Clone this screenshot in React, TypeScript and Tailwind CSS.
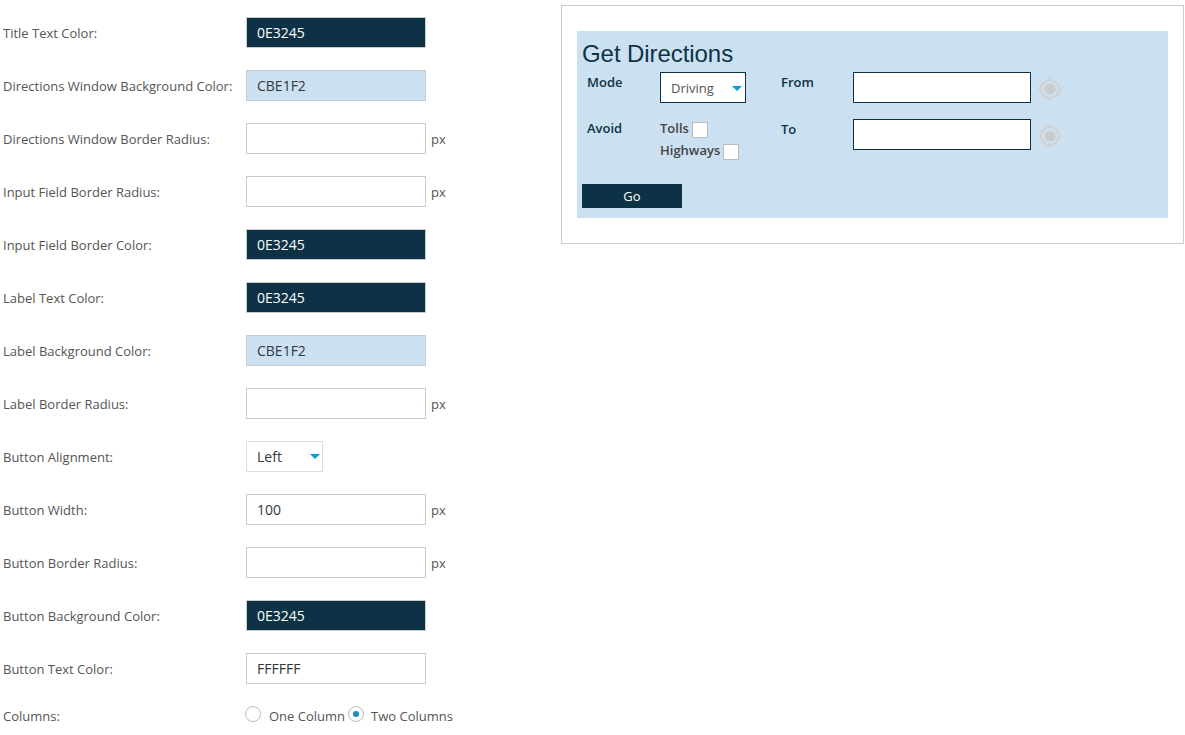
import React from 'react';

type Row = {
  label: string;
  kind: 'dark' | 'light' | 'blank' | 'white';
  value?: string;
  px?: boolean;
};

const rows: Row[] = [
  { label: 'Title Text Color:', kind: 'dark', value: '0E3245' },
  { label: 'Directions Window Background Color:', kind: 'light', value: 'CBE1F2' },
  { label: 'Directions Window Border Radius:', kind: 'blank', px: true },
  { label: 'Input Field Border Radius:', kind: 'blank', px: true },
  { label: 'Input Field Border Color:', kind: 'dark', value: '0E3245' },
  { label: 'Label Text Color:', kind: 'dark', value: '0E3245' },
  { label: 'Label Background Color:', kind: 'light', value: 'CBE1F2' },
  { label: 'Label Border Radius:', kind: 'blank', px: true },
];

const rows2: Row[] = [
  { label: 'Button Width:', kind: 'white', value: '100', px: true },
  { label: 'Button Border Radius:', kind: 'blank', px: true },
  { label: 'Button Background Color:', kind: 'dark', value: '0E3245' },
  { label: 'Button Text Color:', kind: 'white', value: 'FFFFFF' },
];

const Caret = () => (
  <span className="w-0 h-0 border-x-[5px] border-x-transparent border-t-[5px] border-t-[#00a0d2]" />
);

const TargetIcon = () => (
  <svg width="26" height="26" viewBox="0 0 26 26" className="shrink-0">
    <circle cx="13" cy="13" r="9" fill="none" stroke="#d0d0d0" strokeWidth="2" />
    <circle cx="13" cy="13" r="5.5" fill="#cbcbcb" />
    <path d="M13 0.7v3.3M13 22v3.3M0.7 13h3.3M22 13h3.3" stroke="#d3d3d3" strokeWidth="2" />
  </svg>
);

const FieldRow = ({ row }: { row: Row }) => {
  const colors =
    row.kind === 'dark'
      ? 'bg-[#0e3245] text-white'
      : row.kind === 'light'
        ? 'bg-[#cbe1f2] text-[#32373c]'
        : 'bg-white text-[#32373c]';
  return (
    <div className="flex items-center h-[31px] mb-[22px]">
      <label className="w-[243px] shrink-0 pt-[2px] text-[13px] text-[#555]">{row.label}</label>
      <div className={`w-[180px] h-[31px] border border-[#c8ccd0] pl-[10px] flex items-center text-[14px] ${colors}`}>
        {row.value}
      </div>
      {row.px && <span className="ml-[5px] pt-[2px] text-[13px] text-[#555]">px</span>}
    </div>
  );
};

const DirectionsPreview = () => (
  <div className="w-[623px] h-[239px] mt-[5px] border border-[#ccc] bg-white pt-[25px] pl-[15px]">
    <div className="w-[591px] h-[187px] bg-[#cbe1f2] text-[#0e3245] text-[13px]">
      <div className="h-[41px] pl-[5px] pt-[8px] text-[24px] leading-[30px] tracking-[-0.07px] font-['Liberation_Sans',Arial,sans-serif]">
        Get Directions
      </div>

      <div className="flex h-[47px]">
        <div className="w-[83px] pl-[10px] font-semibold leading-[20px]">Mode</div>
        <div className="w-[121px]">
          <div className="w-[86px] h-[31px] border border-[#0e3245] bg-white flex items-center justify-between pt-[2px] pl-[10px] pr-[3px] text-[#555]">
            Driving
            <Caret />
          </div>
        </div>
        <div className="w-[72px] font-semibold leading-[20px]">From</div>
        <div className="w-[178px] h-[31px] border border-[#0e3245] bg-white" />
        <div className="ml-[6px] mt-[4px]">
          <TargetIcon />
        </div>
      </div>

      <div className="flex h-[65px]">
        <div className="w-[83px] pl-[10px] font-semibold leading-[19px]">Avoid</div>
        <div className="w-[121px] text-[#444] font-semibold">
          <div className="flex items-start h-[22px] leading-[18px]">
            Tolls
            <span className="ml-[3px] mt-[3px] w-4 h-4 border border-[#bbb] bg-white" />
          </div>
          <div className="flex items-start leading-[18px]">
            Highways
            <span className="ml-[3px] mt-[3px] w-4 h-4 border border-[#bbb] bg-white" />
          </div>
        </div>
        <div className="w-[72px] font-semibold leading-[20px]">To</div>
        <div className="w-[178px] h-[31px] border border-[#0e3245] bg-white" />
        <div className="ml-[6px] mt-[4px]">
          <TargetIcon />
        </div>
      </div>

      <div className="pl-[5px]">
        <div className="w-[100px] h-[24px] pt-[1px] bg-[#0e3245] text-white font-medium flex items-center justify-center">Go</div>
      </div>
    </div>
  </div>
);

export default function App() {
  return (
    <div className="flex w-[1185px] h-[735px] overflow-hidden bg-white font-['Open_Sans',sans-serif]">
      <div className="w-[561px] shrink-0 pl-[3px] pt-[17px]">
        {rows.map((row) => (
          <FieldRow key={row.label} row={row} />
        ))}

        <div className="flex items-center h-[31px] mb-[22px]">
          <label className="w-[243px] shrink-0 pt-[2px] text-[13px] text-[#555]">Button Alignment:</label>
          <div className="w-[77px] h-[31px] border border-[#ddd] flex items-center justify-between pl-[10px] pr-[2px] text-[14px] text-[#32373c]">
            Left
            <Caret />
          </div>
        </div>

        {rows2.map((row) => (
          <FieldRow key={row.label} row={row} />
        ))}

        <div className="flex items-center h-[16px] text-[13px] text-[#555]">
          <label className="w-[242px] shrink-0 pt-[6px]">Columns:</label>
          <span className="w-4 h-4 rounded-full border border-[#bbb] bg-white" />
          <span className="ml-[8px] mr-[3px] pt-[6px]">One Column</span>
          <span className="w-4 h-4 rounded-full border border-[#bbb] bg-white flex items-center justify-center">
            <span className="w-[6px] h-[6px] rounded-full bg-[#1e8cbe]" />
          </span>
          <span className="ml-[7px] pt-[6px]">Two Columns</span>
        </div>
      </div>

      <DirectionsPreview />
    </div>
  );
}
